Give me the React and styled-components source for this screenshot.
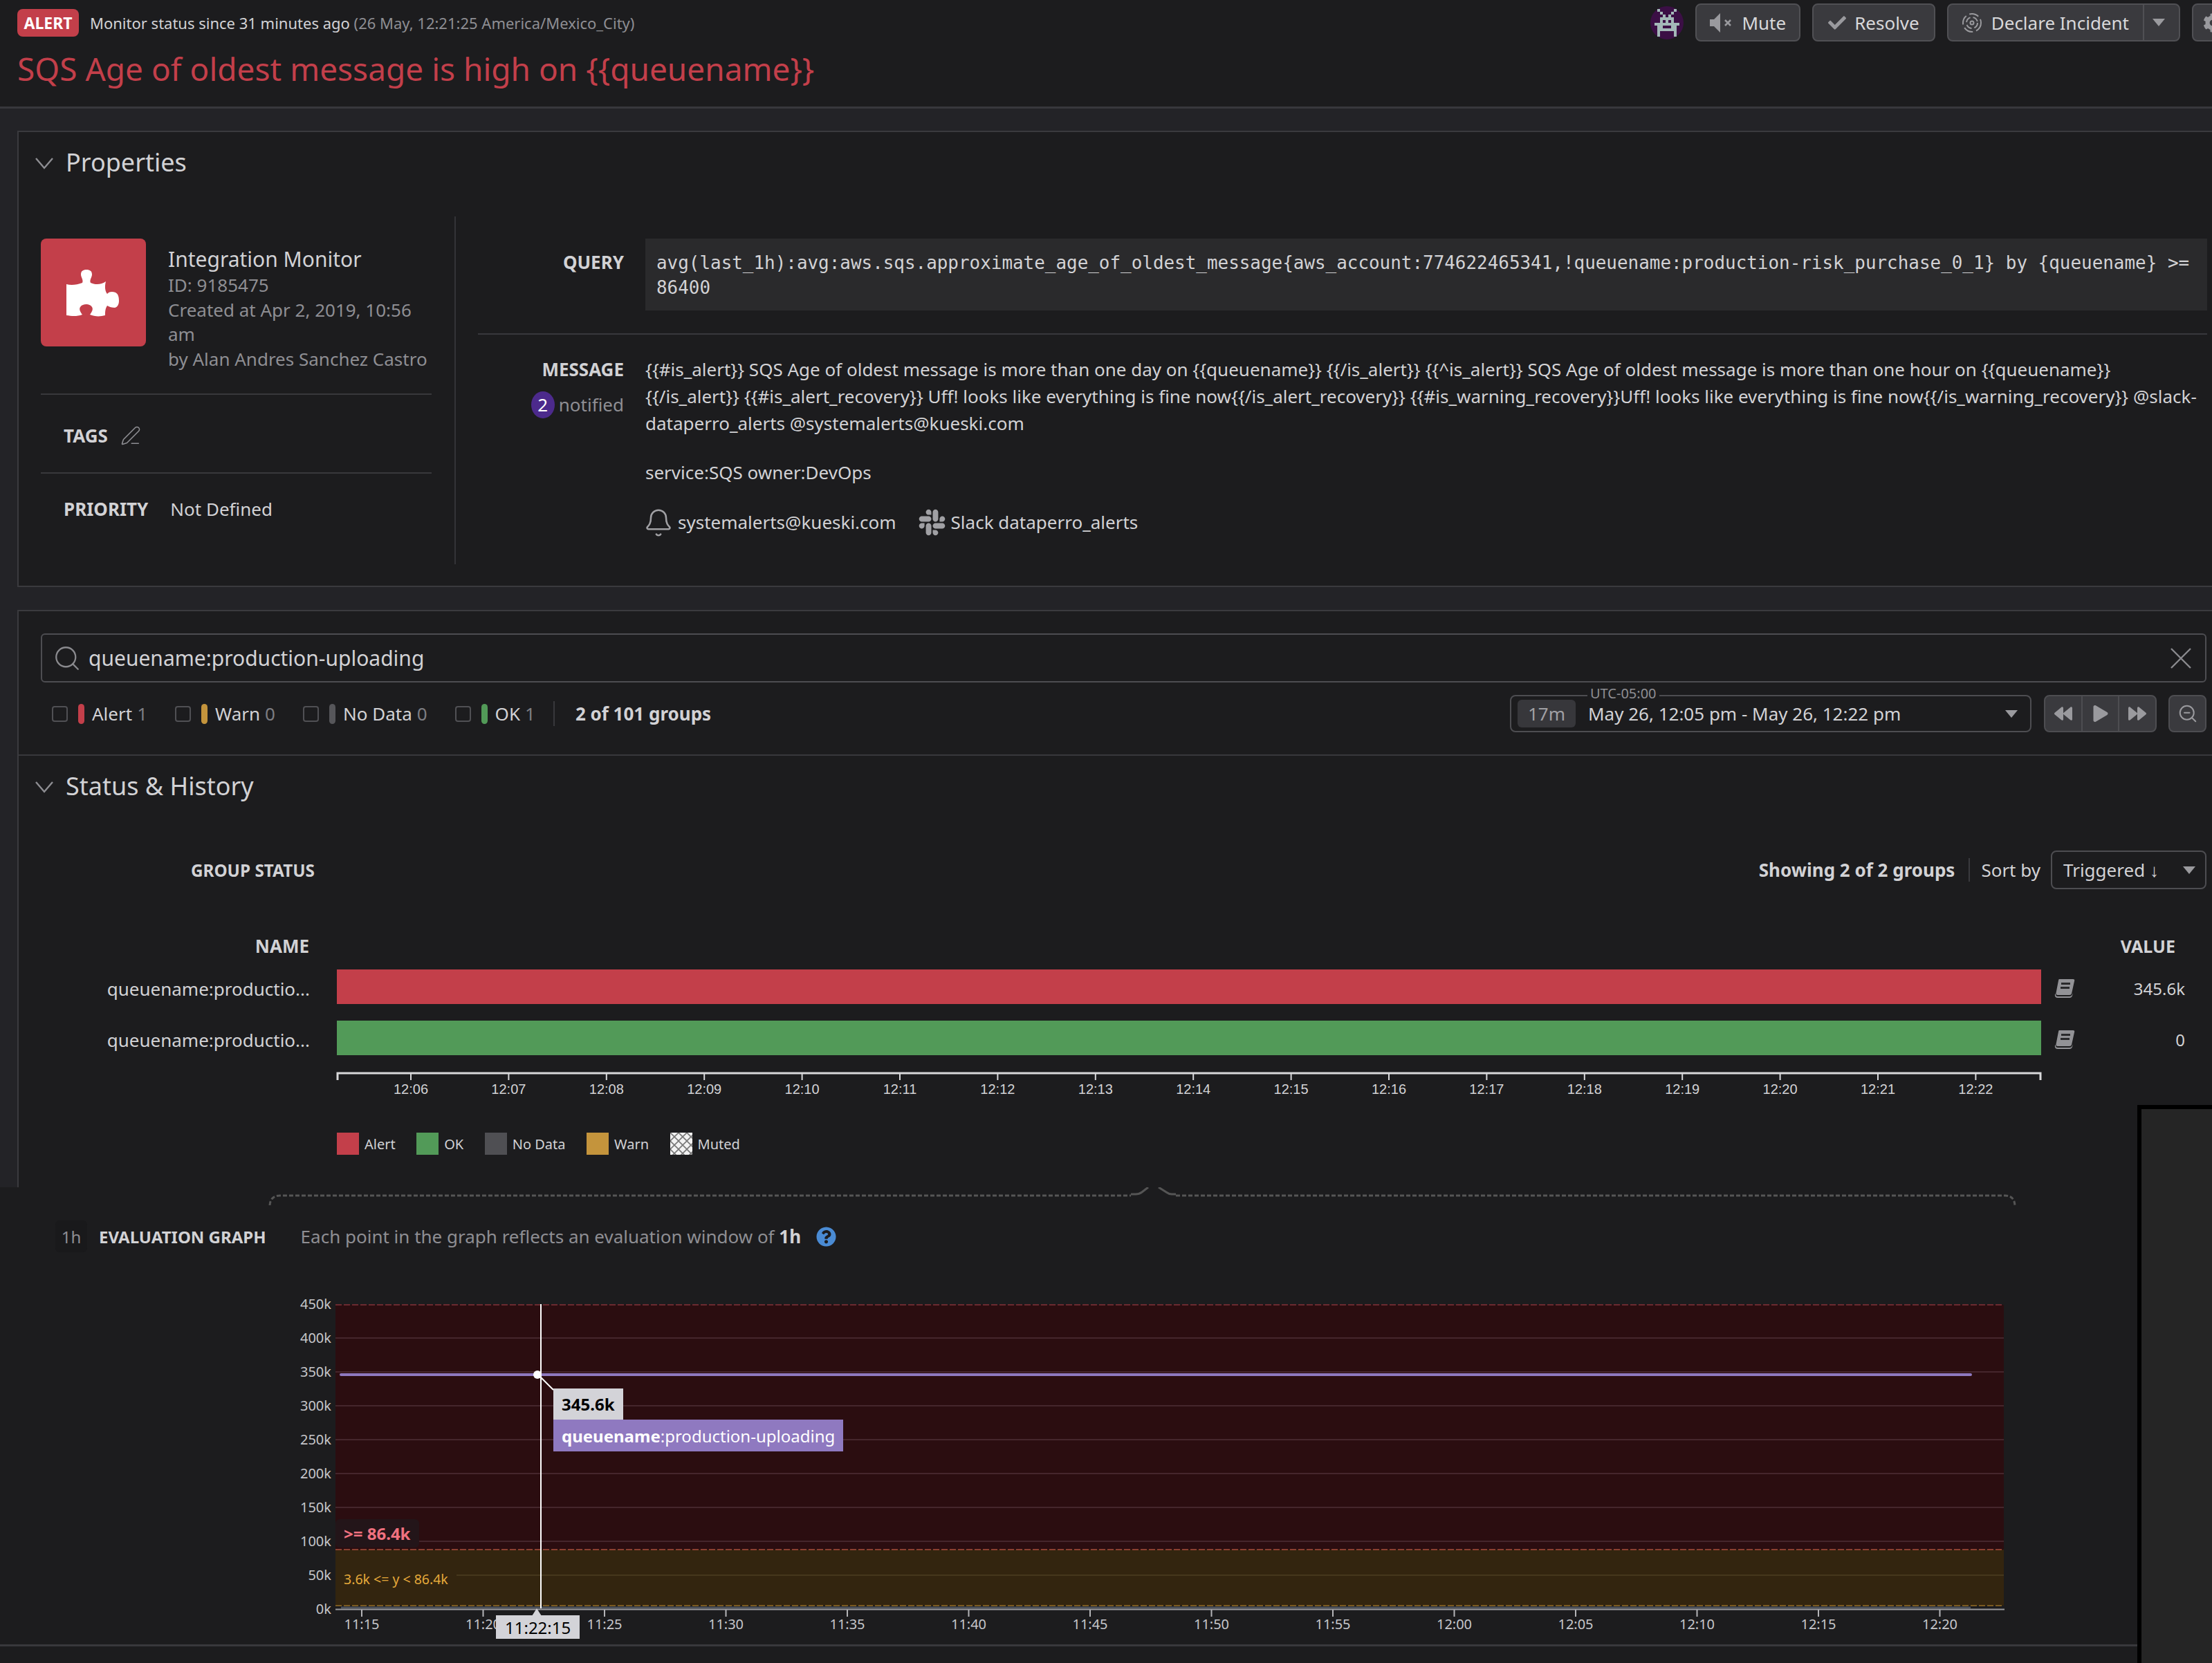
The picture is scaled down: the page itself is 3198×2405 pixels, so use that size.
import React from 'react';
import styled, { createGlobalStyle } from 'styled-components';
import { FaCheck, FaBackward, FaForward, FaPlay, FaCog, FaQuestionCircle, FaSlack } from 'react-icons/fa';
import { Bell, ZoomOut, PenLine, Search } from 'lucide-react';

const Global = createGlobalStyle`
  html, body { margin: 0; padding: 0; background: #1c1c1e; }
  * { box-sizing: border-box; }
`;

const Page = styled.div`
  position: relative;
  width: 3198px;
  height: 2405px;
  overflow: hidden;
  background: #1c1c1e;
  color: #d2d2d5;
  font-family: "Noto Sans", "Open Sans", sans-serif;
  font-size: 26px;
`;
const Header = styled.header`
  height: 157px;
  border-bottom: 3px solid #38383c;
  padding: 5px 0 0 25px;
`;
const TopRow = styled.div`
  display: flex;
  align-items: center;
  justify-content: space-between;
  height: 55px;
  margin-right: -31px;
`;
const Status = styled.div`
  display: flex;
  align-items: center;
  gap: 16px;
  font-size: 22px;
`;
const Badge = styled.span`
  background: #c33f4a;
  color: #fff;
  font-weight: 700;
  font-size: 23px;
  border-radius: 8px;
  width: 89px;
  height: 40px;
  display: flex;
  align-items: center;
  justify-content: center;
  margin-top: 1px;
`;
const Muted = styled.span`
  color: #8e8e93;
`;
const Actions = styled.div`
  display: flex;
  align-items: center;
  gap: 17px;
`;
const Avatar = styled.svg`
  width: 48px;
  height: 48px;
  flex: none;
`;
const Btn = styled.div`
  display: flex;
  align-items: center;
  height: 55px;
  padding: 0 ${p => p.$pad || 20}px;
  gap: 12px;
  background: #3a3a3e;
  border: 2px solid #505054;
  border-radius: 8px;
  color: #d8d8da;
  font-size: 26px;
  white-space: nowrap;
  svg { color: #9a9a9e; flex: none; }
`;
const BtnDivider = styled.span`
  width: 2px;
  align-self: stretch;
  background: #505054;
  margin: 0 0 0 8px;
`;
const Caret = styled.span`
  width: 0;
  height: 0;
  border-left: 9px solid transparent;
  border-right: 9px solid transparent;
  border-top: 11px solid #9a9a9e;
  display: inline-block;
  flex: none;
`;
const Title = styled.h1`
  margin: 7px 0 0;
  color: #c33f4a;
  font-size: 46px;
  font-weight: 400;
  line-height: 64px;
`;
const Gutter = styled.div`
  background: #232327;
  padding: ${p => p.$top}px 0 ${p => p.$bottom}px 25px;
`;
const Panel = styled.section`
  background: #1c1c1e;
  border-top: 2px solid #3a3a3e;
  border-left: 2px solid #3a3a3e;
  border-bottom: ${p => (p.$closed ? '2px solid #3a3a3e' : 'none')};
`;
const Collapse = styled.div`
  display: flex;
  gap: 17px;
  height: ${p => p.$h}px;
  padding: 20px 0 0 23px;
  align-items: flex-start;
  font-size: 36px;
  line-height: 48px;
  color: #d2d2d5;
  svg { flex: none; margin-top: 15px; }
`;
const Columns = styled.div`
  display: flex;
  height: 503px;
`;
const LeftCol = styled.div`
  width: 632px;
  flex: none;
  padding: 32px 33px 0 32px;
  border-right: 2px solid #333337;
`;
const Identity = styled.div`
  display: flex;
  gap: 32px;
  height: 226px;
  border-bottom: 2px solid #38383c;
`;
const IconTile = styled.div`
  width: 152px;
  height: 156px;
  flex: none;
  background: #c33f4a;
  border-radius: 8px;
  svg { display: block; }
`;
const IdText = styled.div`
  color: #8e8e93;
  font-size: 26px;
  line-height: 35.5px;
  margin-top: 10px;
`;
const IdName = styled.div`
  color: #d2d2d5;
  font-size: 30px;
  line-height: 40px;
`;
const MetaRow = styled.div`
  display: flex;
  align-items: center;
  gap: ${p => p.$gap}px;
  height: ${p => p.$h}px;
  padding: ${p => p.$pt}px 0 0 33px;
  border-bottom: ${p => (p.$line ? '2px solid #38383c' : 'none')};
  svg { color: #8e8e93; }
`;
const Strong = styled.b`
  font-weight: 700;
  font-size: ${p => p.$s || 24}px;
  color: #d2d2d5;
`;
const RightCol = styled.div`
  flex: 1;
  padding: 32px 7px 0 32px;
`;
const LabelRow = styled.div`
  display: flex;
  gap: 31px;
  padding-bottom: ${p => p.$pb || 0}px;
  padding-top: ${p => p.$pt || 0}px;
  border-bottom: ${p => (p.$line ? '2px solid #38383c' : 'none')};
`;
const SideLabel = styled.div`
  width: 211px;
  flex: none;
  text-align: right;
  line-height: 39px;
  margin-top: ${p => p.$mt || 0}px;
`;
const Notified = styled.div`
  display: flex;
  justify-content: flex-end;
  align-items: center;
  gap: 6px;
  margin-top: 12px;
  color: #8e8e93;
  font-size: 26px;
`;
const CountDot = styled.span`
  width: 34px;
  height: 39px;
  border-radius: 50%;
  background: #4c2a8c;
  color: #fff;
  display: flex;
  align-items: center;
  justify-content: center;
  font-size: 26px;
`;
const QueryBox = styled.div`
  flex: 1;
  background: #2a2a2c;
  padding: 17px 14px 15px 16px;
  height: 104px;
  font-family: "DejaVu Sans Mono", "Liberation Mono", monospace;
  font-size: 25.93px;
  line-height: 36px;
  color: #d2d2d5;
`;
const MsgBody = styled.div`
  flex: 1;
  line-height: 39px;
  font-size: 26px;
  min-width: 0;
`;
const MsgBlock = styled.p`
  margin: ${p => p.$mt || 0}px 0 0;
`;
const Recipients = styled.div`
  display: flex;
  align-items: center;
  margin-top: 33px;
  height: 39px;
`;
const Recipient = styled.span`
  display: flex;
  align-items: center;
  gap: ${p => p.$gap}px;
  margin-right: ${p => p.$mr || 0}px;
  svg { color: #a0a0a4; flex: none; margin: ${p => p.$iconMargin || '0'}; }
`;
const SearchBox = styled.div`
  display: flex;
  align-items: center;
  height: 71px;
  margin: 32px 8px 0 32px;
  padding: 0 20px 0 15px;
  gap: 10px;
  border: 2px solid #4d4d51;
  border-radius: 6px;
  font-size: 30px;
  svg { color: #8a8a8e; flex: none; }
`;
const SearchText = styled.span`
  flex: 1;
`;
const FilterRow = styled.div`
  display: flex;
  align-items: center;
  height: 106px;
  padding: 0 8px 14px 48px;
  border-bottom: 2px solid #38383c;
`;
const Check = styled.span`
  width: 23px;
  height: 23px;
  border: 2px solid #505054;
  border-radius: 4px;
  flex: none;
`;
const StatusBar = styled.span`
  width: 9px;
  height: 29px;
  border-radius: 5px;
  background: ${p => p.$c};
  margin: 0 11px 0 15px;
  flex: none;
`;
const FilterItem = styled.div`
  display: flex;
  align-items: center;
  margin-right: 40px;
`;
const Count = styled.span`
  color: #7d7d82;
  margin-left: 7px;
`;
const FilterRule = styled.span`
  width: 2px;
  height: 36px;
  background: #38383c;
  margin: 0 30px 0 -14px;
`;
const Spacer = styled.div`
  flex: 1;
`;
const TimePicker = styled.div`
  position: relative;
  width: 754px;
  height: 54px;
  border: 2px solid #4d4d51;
  border-radius: 8px;
  display: flex;
  align-items: center;
  padding: 0 18px 0 9px;
`;
const Utc = styled.span`
  position: absolute;
  left: 110px;
  top: -14px;
  padding: 0 4px;
  background: #1c1c1e;
  color: #8e8e93;
  font-size: 20px;
  line-height: 20px;
`;
const Chip = styled.span`
  background: #37373b;
  color: #a0a0a4;
  width: 84px;
  height: 40px;
  border-radius: 6px;
  display: flex;
  align-items: center;
  justify-content: center;
  margin-right: 18px;
`;
const Controls = styled.div`
  display: flex;
  height: 54px;
  width: 163px;
  margin: 0 17px 0 18px;
  background: #3a3a3e;
  border: 2px solid #4d4d51;
  border-radius: 8px;
`;
const Ctrl = styled.span`
  flex: 1;
  display: flex;
  align-items: center;
  justify-content: center;
  color: #9a9a9e;
  border-left: ${p => (p.$first ? 'none' : '2px solid #4d4d51')};
`;
const ZoomBtn = styled.div`
  width: 55px;
  height: 54px;
  background: #3a3a3e;
  border: 2px solid #4d4d51;
  border-radius: 8px;
  display: flex;
  align-items: center;
  justify-content: center;
  color: #9a9a9e;
`;
const GroupBar = styled.div`
  display: flex;
  align-items: center;
  height: 56px;
  margin-top: 49px;
  padding-right: 8px;
`;
const GroupTitle = styled.div`
  width: 428px;
  text-align: right;
`;
const Divider = styled.span`
  width: 2px;
  height: 34px;
  background: #3a3a3e;
  margin: 0 16px 0 20px;
`;
const SortBy = styled.span`
  margin-right: 15px;
`;
const SortSelect = styled.div`
  width: 225px;
  height: 56px;
  border: 2px solid #4d4d51;
  border-radius: 8px;
  display: flex;
  align-items: center;
  justify-content: space-between;
  padding: 0 14px 0 16px;
`;
const ColsHead = styled.div`
  display: flex;
  justify-content: space-between;
  align-items: center;
  height: 34px;
  margin-top: 65px;
  padding-right: 53px;
`;
const NameHead = styled.div`
  width: 420px;
  text-align: right;
`;
const BarRow = styled.div`
  display: flex;
  align-items: center;
  height: 50px;
  margin-top: ${p => p.$mt}px;
`;
const BarName = styled.div`
  width: 421px;
  flex: none;
  text-align: right;
  font-size: 26px;
  line-height: 50px;
  padding-top: 6px;
`;
const BarFill = styled.div`
  width: 2464px;
  height: 50px;
  flex: none;
  margin-left: 39px;
  background: ${p => p.$c};
`;
const BookSvg = styled.svg`
  width: 30px;
  height: 28px;
  margin: 5px 0 0 19px;
  flex: none;
`;
const BarValue = styled.div`
  width: 159px;
  text-align: right;
  font-size: 24px;
  padding-top: 5px;
  flex: none;
`;
const AxisSvg = styled.svg`
  display: block;
  width: 2480px;
  height: 55px;
  margin: 14px 0 0 455px;
`;
const Legend = styled.div`
  display: flex;
  align-items: center;
  gap: 30.5px;
  margin: 43px 0 0 460px;
  height: 32px;
  font-size: 20px;
`;
const LegendItem = styled.span`
  display: flex;
  align-items: center;
  gap: 8px;
`;
const Swatch = styled.span`
  width: 32px;
  height: 32px;
  background: ${p => p.$c};
  flex: none;
`;
const MutedSwatch = styled.svg`
  width: 32px;
  height: 32px;
  flex: none;
`;
const PanelEnd = styled.div`
  height: ${p => p.$h}px;
`;
const EvalSection = styled.section`
  height: 664px;
  border-bottom: 3px solid #38383c;
`;
const Bracket = styled.svg`
  display: block;
  width: 3198px;
  height: 40px;
`;
const EvalHead = styled.div`
  display: flex;
  align-items: center;
  height: 62px;
  padding-left: 80px;
`;
const OneH = styled.span`
  width: 46px;
  height: 46px;
  background: #19191b;
  border-radius: 6px;
  display: flex;
  align-items: center;
  justify-content: center;
  color: #8e8e93;
  font-size: 24px;
  margin-right: 17px;
`;
const EvalDesc = styled.span`
  color: #8e8e93;
  margin: 0 22px 0 50px;
  b { color: #d2d2d5; font-weight: 700; }
`;
const ChartWrap = styled.div`
  position: relative;
  width: 2520px;
  height: 509px;
  margin: 51px 0 0 400px;
  svg { display: block; }
`;
const Tip = styled.div`
  position: absolute;
  left: ${p => p.$x - 400}px;
  top: ${p => p.$y - 1870}px;
  height: ${p => p.$h}px;
  background: ${p => p.$bg};
  color: ${p => p.$c};
  padding: 0 ${p => p.$pad || 12}px;
  font-size: ${p => p.$fs}px;
  font-weight: ${p => p.$fw || 400};
  display: flex;
  align-items: center;
  white-space: pre;
  border-radius: ${p => p.$r || 0}px;
  b { font-weight: 700; }
`;
const Overlay = styled.div`
  position: absolute;
  left: 3090px;
  top: 1598px;
  width: 108px;
  height: 807px;
  background: #252525;
  border-top: 6px solid #000;
  border-left: 6px solid #000;
`;

const invader = [
  '.#.....#.',
  '..#...#..',
  '...#.#...',
  '..#####..',
  '..#.#.#..',
  '#########',
  '.##...##.',
  '.#######.',
  '.#.....#.',
  '.#.....#.',
];

const Chevron = () => (
  <svg width="28" height="20" viewBox="0 0 28 20" fill="none">
    <path d="M2 3 L14 17 L26 3" stroke="#8e8e93" strokeWidth="2.4" />
  </svg>
);

const Puzzle = () => (
  <svg width="152" height="156" viewBox="0 0 152 156">
    <path
      fill="#fff"
      d="M37 66 C44 68 52 67 60 64 C62 60 58 56 58 52 C58 47 61 45 66 45 C71 45 74 47 74 52 C74 56 70 60 72 64 C78 67 88 67 94 62 C92 70 93 76 96 80 C100 76 104 77 108 78 C112 80 113 85 113 90 C113 95 111 99 107 100 C103 100 99 99 96 97 C93 102 93 106 93 111 C86 113 78 113 71 110 C74 106 76 102 74 99 C72 96 69 95 66 95 C62 95 59 96 57 99 C55 102 57 106 60 110 C52 113 44 112 37 111 Z"
    />
  </svg>
);

const Book = () => (
  <BookSvg viewBox="0 0 30 28">
    <path d="M7 0 H27 Q30 0 29 3 L25 21 Q24.5 23 22 23 H5 Q2 23 2.5 20 L6 2 Q6.3 0 7 0 Z" fill="#929296" />
    <path d="M1 21 Q0 27 5 27 H22 Q25 27 26 24 L27 20 L25.6 23 Q24.6 25 22 25 H5 Q2 25 2 22 Z" fill="#929296" />
    <rect x="10" y="5" width="13" height="3" fill="#2a2a2c" />
    <rect x="9" y="11" width="13" height="3" fill="#2a2a2c" />
  </BookSvg>
);

const timelineTicks = Array.from({ length: 17 }, (_, i) => ({
  x: 594 + i * 141.4,
  label: `12:${String(i + 6).padStart(2, '0')}`,
}));

const yTicks = [450, 400, 350, 300, 250, 200, 150, 100, 50, 0];
const yOf = k => 2327 - (k / 50) * 49;
const xTicks = ['11:15', '11:20', '11:25', '11:30', '11:35', '11:40', '11:45', '11:50', '11:55', '12:00', '12:05', '12:10', '12:15', '12:20'];

const filters = [
  { name: 'Alert', n: 1, c: '#c33f4a' },
  { name: 'Warn', n: 0, c: '#c4943c' },
  { name: 'No Data', n: 0, c: '#56565a' },
  { name: 'OK', n: 1, c: '#529a58' },
];

const query = 'avg(last_1h):avg:aws.sqs.approximate_age_of_oldest_message{aws_account:774622465341,!queuename:production-risk_purchase_0_1} by {queuename} >= 86400';
const message = '{{#is_alert}} SQS Age of oldest message is more than one day on {{queuename}} {{/is_alert}} {{^is_alert}} SQS Age of oldest message is more than one hour on {{queuename}} {{/is_alert}} {{#is_alert_recovery}} Uff! looks like everything is fine now{{/is_alert_recovery}} {{#is_warning_recovery}}Uff! looks like everything is fine now{{/is_warning_recovery}} @slack-dataperro_alerts @systemalerts@kueski.com';

export default function App() {
  return (
    <Page>
      <Global />
      <Header>
        <TopRow>
          <Status>
            <Badge>ALERT</Badge>
            <span>
              Monitor status since 31 minutes ago <Muted>(26 May, 12:21:25 America/Mexico_City)</Muted>
            </span>
          </Status>
          <Actions>
            <Avatar viewBox="0 0 48 48">
              <circle cx="24" cy="24" r="24" fill="#3b0f45" />
              {invader.flatMap((row, y) =>
                [...row].map((ch, x) =>
                  ch === '#' ? <rect key={`${x}-${y}`} x={6 + x * 4} y={4 + y * 4} width="4" height="4" fill="#a3b8b8" /> : null
                )
              )}
            </Avatar>
            <Btn $pad={19}>
              <svg width="34" height="30" viewBox="0 0 34 30">
                <path d="M0 10 H6 L15 1 V29 L6 20 H0 Z" fill="currentColor" />
                <path d="M22 11 L30 19 M30 11 L22 19" stroke="currentColor" strokeWidth="2.5" />
              </svg>
              Mute
            </Btn>
            <Btn $pad={21}>
              <FaCheck size={26} />
              Resolve
            </Btn>
            <Btn $pad={20}>
              <svg width="30" height="30" viewBox="0 0 30 30" fill="none" stroke="currentColor" strokeWidth="2">
                <circle cx="14" cy="15" r="2.5" />
                <circle cx="14" cy="15" r="8" strokeDasharray="9 4" />
                <circle cx="14" cy="15" r="13" strokeDasharray="14 5" />
              </svg>
              Declare Incident
              <BtnDivider />
              <Caret />
            </Btn>
            <Btn $pad={14}>
              <FaCog size={28} />
            </Btn>
          </Actions>
        </TopRow>
        <Title>{'SQS Age of oldest message is high on {{queuename}}'}</Title>
      </Header>

      <Gutter $top={32} $bottom={33}>
        <Panel $closed>
          <Collapse $h={122}>
            <Chevron />
            Properties
          </Collapse>
          <Columns>
            <LeftCol>
              <Identity>
                <IconTile>
                  <Puzzle />
                </IconTile>
                <IdText>
                  <IdName>Integration Monitor</IdName>
                  ID: 9185475
                  <br />
                  Created at Apr 2, 2019, 10:56 am
                  <br />
                  by Alan Andres Sanchez Castro
                </IdText>
              </Identity>
              <MetaRow $h={114} $gap={18} $pt={6} $line>
                <Strong $s={26}>TAGS</Strong>
                <PenLine size={30} strokeWidth={1.3} />
              </MetaRow>
              <MetaRow $h={100} $gap={32} $pt={2}>
                <Strong $s={26}>PRIORITY</Strong>
                <span>Not Defined</span>
              </MetaRow>
            </LeftCol>
            <RightCol>
              <LabelRow $pb={33} $line>
                <SideLabel $mt={15}>
                  <Strong $s={26}>QUERY</Strong>
                </SideLabel>
                <QueryBox>{query}</QueryBox>
              </LabelRow>
              <LabelRow $pt={31}>
                <SideLabel>
                  <Strong $s={26}>MESSAGE</Strong>
                  <Notified>
                    <CountDot>2</CountDot>
                    notified
                  </Notified>
                </SideLabel>
                <MsgBody>
                  <MsgBlock>{message}</MsgBlock>
                  <MsgBlock $mt={32}>service:SQS owner:DevOps</MsgBlock>
                  <Recipients>
                    <Recipient $gap={12} $mr={30} $iconMargin="-5px -6px -5px -3px">
                      <Bell size={44} strokeWidth={1.4} />
                      systemalerts@kueski.com
                    </Recipient>
                    <Recipient $gap={6}>
                      <FaSlack size={43} />
                      Slack dataperro_alerts
                    </Recipient>
                  </Recipients>
                </MsgBody>
              </LabelRow>
            </RightCol>
          </Columns>
          <PanelEnd $h={31} />
        </Panel>
      </Gutter>

      <Gutter $top={0} $bottom={0}>
        <Panel>
          <SearchBox>
            <Search size={42} strokeWidth={1.3} />
            <SearchText>queuename:production-uploading</SearchText>
            <svg width="30" height="30" viewBox="0 0 30 30" fill="none">
              <path d="M1 1 L29 29 M29 1 L1 29" stroke="currentColor" strokeWidth="2.4" />
            </svg>
          </SearchBox>
          <FilterRow>
            {filters.map(f => (
              <FilterItem key={f.name}>
                <Check />
                <StatusBar $c={f.c} />
                {f.name}
                <Count>{f.n}</Count>
              </FilterItem>
            ))}
            <FilterRule />
            <Strong $s={26}>2 of 101 groups</Strong>
            <Spacer />
            <TimePicker>
              <Utc>UTC-05:00</Utc>
              <Chip>17m</Chip>
              May 26, 12:05 pm - May 26, 12:22 pm
              <Spacer />
              <Caret />
            </TimePicker>
            <Controls>
              <Ctrl $first>
                <FaBackward size={26} />
              </Ctrl>
              <Ctrl>
                <FaPlay size={24} />
              </Ctrl>
              <Ctrl>
                <FaForward size={26} />
              </Ctrl>
            </Controls>
            <ZoomBtn>
              <ZoomOut size={30} strokeWidth={1.6} />
            </ZoomBtn>
          </FilterRow>
          <Collapse $h={88}>
            <Chevron />
            Status &amp; History
          </Collapse>
          <GroupBar>
            <GroupTitle>
              <Strong $s={24.3}>GROUP STATUS</Strong>
            </GroupTitle>
            <Spacer />
            <Strong $s={26}>Showing 2 of 2 groups</Strong>
            <Divider />
            <SortBy>Sort by</SortBy>
            <SortSelect>
              Triggered ↓
              <Caret />
            </SortSelect>
          </GroupBar>
          <ColsHead>
            <NameHead>
              <Strong $s={26}>NAME</Strong>
            </NameHead>
            <Strong $s={25}>VALUE</Strong>
          </ColsHead>
          <BarRow $mt={17}>
            <BarName>queuename:productio...</BarName>
            <BarFill $c="#c33f4a" />
            <Book />
            <BarValue>345.6k</BarValue>
          </BarRow>
          <BarRow $mt={24}>
            <BarName>queuename:productio...</BarName>
            <BarFill $c="#529a58" />
            <Book />
            <BarValue>0</BarValue>
          </BarRow>
          <AxisSvg viewBox="482 1540 2480 55">
            <path d="M488 1562 V1552 H2950 V1562" fill="none" stroke="#d8d8da" strokeWidth="3" />
            {timelineTicks.map(t => (
              <g key={t.label}>
                <line x1={t.x} x2={t.x} y1="1552" y2="1562" stroke="#d8d8da" strokeWidth="2" />
                <text x={t.x} y="1582" fill="#d2d2d5" fontFamily="Liberation Sans" fontSize="20" textAnchor="middle">
                  {t.label}
                </text>
              </g>
            ))}
          </AxisSvg>
          <Legend>
            <LegendItem>
              <Swatch $c="#c33f4a" />
              Alert
            </LegendItem>
            <LegendItem>
              <Swatch $c="#529a58" />
              OK
            </LegendItem>
            <LegendItem>
              <Swatch $c="#4f4f53" />
              No Data
            </LegendItem>
            <LegendItem>
              <Swatch $c="#c4943c" />
              Warn
            </LegendItem>
            <LegendItem>
              <MutedSwatch viewBox="0 0 32 32">
                <defs>
                  <pattern id="hatch" width="12" height="12" patternUnits="userSpaceOnUse">
                    <rect width="12" height="12" fill="#f2f2f2" />
                    <path d="M0 0 L12 12 M12 0 L0 12" stroke="#777" strokeWidth="1.6" />
                  </pattern>
                </defs>
                <rect width="32" height="32" fill="url(#hatch)" />
              </MutedSwatch>
              Muted
            </LegendItem>
          </Legend>
          <PanelEnd $h={47} />
        </Panel>
      </Gutter>

      <EvalSection>
        <Bracket viewBox="0 1717 3198 40" fill="none">
          <path d="M390 1743 Q391 1729 405 1729 H1635" stroke="#555" strokeWidth="3" strokeDasharray="6 3" />
          <path d="M1700 1729 H2899 Q2912 1729 2913 1743" stroke="#555" strokeWidth="3" strokeDasharray="6 3" />
          <path d="M1635 1727 H1642 Q1647 1727 1651 1724 L1660 1717" stroke="#555" strokeWidth="3" />
          <path d="M1675 1717 L1686 1724 Q1690 1727 1694 1727 H1700" stroke="#555" strokeWidth="3" />
        </Bracket>
        <EvalHead>
          <OneH>1h</OneH>
          <Strong>EVALUATION GRAPH</Strong>
          <EvalDesc>
            Each point in the graph reflects an evaluation window of <b>1h</b>
          </EvalDesc>
          <FaQuestionCircle size={29} color="#4a8bd4" />
        </EvalHead>
        <ChartWrap>
          <svg width="2520" height="509" viewBox="400 1870 2520 509">
            <rect x="485" y="1887" width="2412" height="354" fill="#2b0d10" />
            <rect x="485" y="2241" width="2412" height="81" fill="#33250f" />
            {yTicks.map(k => (
              <g key={k}>
                {k < 450 && k > 0 && (
                  <line x1="485" x2="2897" y1={yOf(k)} y2={yOf(k)} stroke={k === 50 ? '#46371c' : '#45262c'} strokeWidth="2" />
                )}
                <text x="479" y={yOf(k) + 7} fill="#c6c6ca" fontFamily="Noto Sans" fontSize="20" textAnchor="end">
                  {k}k
                </text>
              </g>
            ))}
            <line x1="485" x2="2897" y1="1887" y2="1887" stroke="#6b2a30" strokeWidth="2" strokeDasharray="9 3" />
            <line x1="485" x2="2897" y1="2241" y2="2241" stroke="#8a4030" strokeWidth="2" strokeDasharray="9 3" />
            <line x1="485" x2="2897" y1="2322" y2="2322" stroke="#7a5a20" strokeWidth="2" strokeDasharray="9 3" />
            <line x1="493" x2="2849" y1="2325" y2="2325" stroke="#4d525c" strokeWidth="3" />
            <line x1="485" x2="2898" y1="2327.5" y2="2327.5" stroke="#9a9a9e" strokeWidth="2" />
            {xTicks.map((t, i) => {
              const x = 523 + i * 175.5;
              return (
                <g key={t}>
                  <line x1={x} x2={x} y1="2328" y2="2338" stroke="#b5b5b8" strokeWidth="2" />
                  <text x={x} y="2356" fill="#c6c6ca" fontFamily="Noto Sans" fontSize="20" textAnchor="middle">
                    {t}
                  </text>
                </g>
              );
            })}
            <line x1="493" x2="2849" y1="1988" y2="1988" stroke="#8f79c0" strokeWidth="4" strokeLinecap="round" />
            <line x1="782" x2="782" y1="1886" y2="2326" stroke="#fff" strokeWidth="2" />
            <line x1="778" x2="800" y1="1988" y2="2010" stroke="#fff" strokeWidth="2" />
            <circle cx="777" cy="1988" r="6" fill="#fff" />
            <path d="M776 2326 L769 2337 H783 Z" fill="#d3d3d8" />
          </svg>
          <Tip $x={485} $y={2197} $h={41} $bg="#231519" $c="#f0717f" $fs={24} $fw={700} $r={6}>
            &gt;= 86.4k
          </Tip>
          <Tip $x={485} $y={2268} $h={30} $bg="#33250f" $c="#e5a93a" $fs={19.5}>
            3.6k &lt;= y &lt; 86.4k
          </Tip>
          <Tip $x={800} $y={2008} $h={45} $bg="#d3d3d8" $c="#000" $fs={24} $fw={700}>
            345.6k
          </Tip>
          <Tip $x={800} $y={2053} $h={46} $bg="#8f79c0" $c="#fff" $fs={24}>
            <b>queuename</b>:production-uploading
          </Tip>
          <Tip $x={717} $y={2336} $h={34} $bg="#d3d3d8" $c="#000" $fs={24} $pad={13}>
            11:22:15
          </Tip>
        </ChartWrap>
      </EvalSection>

      <Overlay />
    </Page>
  );
}
